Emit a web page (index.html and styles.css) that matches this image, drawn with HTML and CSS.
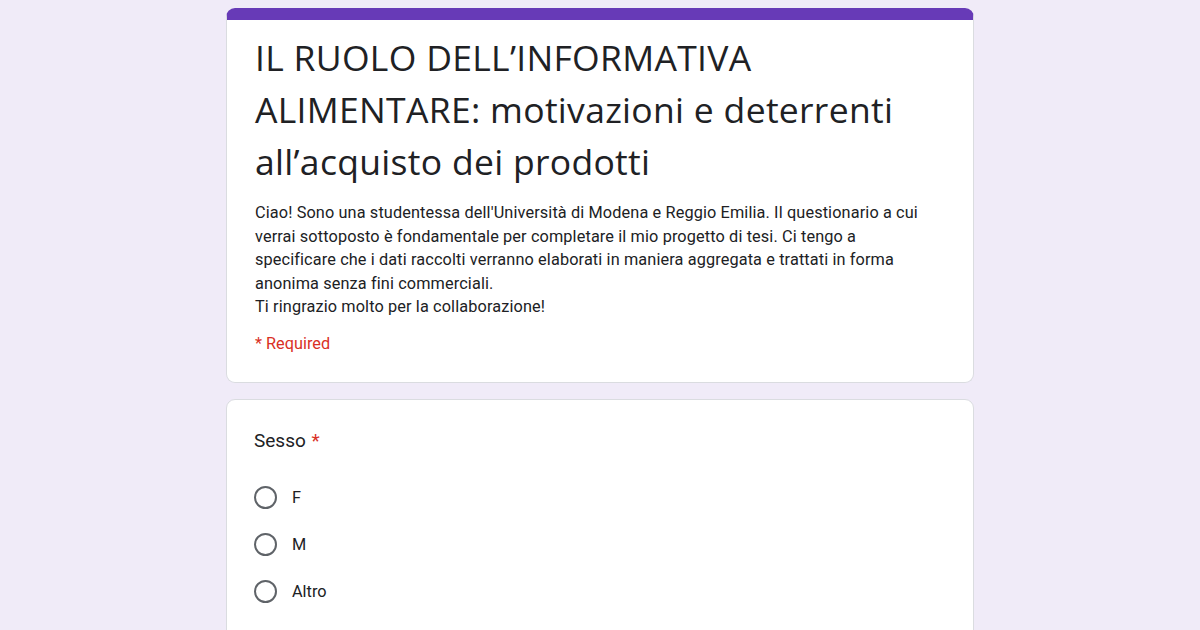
FILE: index.html
```
<!DOCTYPE html>
<html lang="it">
<head>
<meta charset="utf-8">
<link rel="stylesheet" href="styles.css">
</head>
<body>
<main class="form">
  <section class="card header-card">
    <h1 class="title">IL RUOLO DELL’INFORMATIVA ALIMENTARE: motivazioni e deterrenti all’acquisto dei prodotti</h1>
    <div class="desc">Ciao! Sono una studentessa dell'Università di Modena e Reggio Emilia. Il questionario a cui verrai sottoposto è fondamentale per completare il mio progetto di tesi. Ci tengo a specificare che i dati raccolti verranno elaborati in maniera aggregata e trattati in forma anonima senza fini commerciali.<br>Ti ringrazio molto per la collaborazione!</div>
    <div class="required">* Required</div>
  </section>
  <section class="card question">
    <div class="q-title">Sesso <span class="star">*</span></div>
    <div class="options">
      <label class="option"><span class="radio"></span><span class="opt-label">F</span></label>
      <label class="option"><span class="radio"></span><span class="opt-label">M</span></label>
      <label class="option"><span class="radio"></span><span class="opt-label">Altro</span></label>
    </div>
  </section>
</main>
</body>
</html>
```
FILE: styles.css
```
html, body {
  margin: 0;
  padding: 0;
  background: #f0ebf8;
  height: 630px;
  overflow: hidden;
}
body {
  font-family: Roboto, "Liberation Sans", sans-serif;
  color: #202124;
}
.form {
  width: 748px;
  margin: 8px auto 0;
  display: flex;
  flex-direction: column;
  gap: 16px;
}
.card {
  background: #fff;
  border: 1px solid #dadce0;
  border-radius: 9px;
  box-sizing: border-box;
}
.header-card {
  border-top: 12px solid #673ab7;
  padding: 11px 28px 27px 28px;
}
.title {
  margin: 0;
  font-family: "Open Sans", Roboto, sans-serif;
  font-weight: 400;
  font-size: 35.5px;
  line-height: 52px;
  letter-spacing: 0.3px;
  color: #202124;
}
.desc {
  margin-top: 14px;
  max-width: 682px;
  font-size: 16.3px;
  line-height: 23.5px;
  letter-spacing: 0.12px;
  color: #202124;
}
.required {
  margin-top: 13px;
  font-size: 16.3px;
  line-height: 23.5px;
  color: #d93025;
}
.question {
  padding: 27.5px 28px 20px 27px;
  min-height: 240px;
}
.q-title {
  font-size: 19px;
  line-height: 26px;
  color: #202124;
}
.star {
  color: #d93025;
  margin-left: 1px;
}
.options {
  margin-top: 32.5px;
  display: flex;
  flex-direction: column;
  gap: 24px;
}
.option {
  display: flex;
  align-items: center;
  gap: 15px;
  height: 23px;
}
.radio {
  width: 23px;
  height: 23px;
  box-sizing: border-box;
  border: 2.3px solid #5f6368;
  border-radius: 50%;
  flex: none;
}
.opt-label {
  font-size: 16.3px;
  line-height: 23px;
  color: #202124;
}
```
